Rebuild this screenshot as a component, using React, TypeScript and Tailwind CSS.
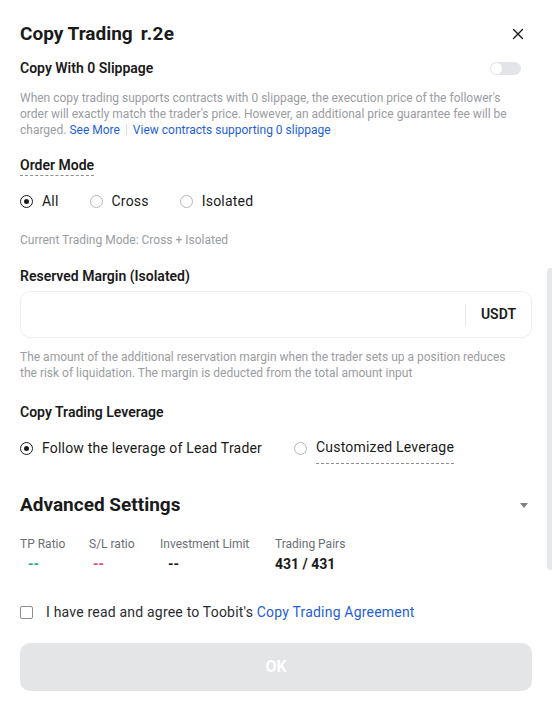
import { X } from "lucide-react";

function Radio({ checked, label, dashed }: { checked?: boolean; label: string; dashed?: boolean }) {
  return (
    <label className="flex items-center gap-[9px]">
      <span
        className={
          checked
            ? "flex size-[13px] items-center justify-center rounded-full border border-[#1a1a1a]"
            : "flex size-[13px] items-center justify-center rounded-full border border-[#b4b6bb]"
        }
      >
        {checked ? <span className="size-[5px] rounded-full bg-[#1a1a1a]" /> : null}
      </span>
      <span
        className={
          dashed
            ? "border-b border-dashed border-[#8a8d93] pb-[5px] pt-[5px] text-[14px] tracking-[0.2px] text-[#1a1a1a]"
            : "text-[14px] tracking-[0.2px] text-[#1a1a1a]"
        }
      >
        {label}
      </span>
    </label>
  );
}

function Stat({ label, value, className }: { label: string; value: string; className: string }) {
  return (
    <div className="flex flex-col gap-[2px]">
      <span className="text-[12px] leading-4 text-[#6b6e75]">{label}</span>
      <span className={className}>{value}</span>
    </div>
  );
}

export default function App() {
  return (
    <div className="relative h-[709px] w-[552px] overflow-hidden bg-white font-['Roboto',sans-serif] text-[#1a1a1a]">
      {/* scrollbar thumb on the right edge */}
      <div className="absolute right-0 top-[268px] h-[302px] w-[5px] rounded-l-sm bg-[#e6e7e9]" />

      <div className="flex flex-col px-5">
        <div className="flex items-center justify-between pt-[22px]">
          <h1 className="text-[19px] font-bold leading-6">
            Copy Trading<span className="ml-[8px] tracking-[0.4px]">r.2e</span>
          </h1>
          <X className="mr-[5px] size-[18px] text-[#1a1a1a]" strokeWidth={1.8} />
        </div>

        <div className="mt-[12px] flex items-center justify-between">
          <span className="text-[14px] font-semibold leading-5">Copy With 0 Slippage</span>
          <span className="mr-[11px] flex h-[13px] w-[31px] items-center rounded-full bg-[#e3e4e7] px-[1px]">
            <span className="size-[11px] rounded-full bg-white" />
          </span>
        </div>

        <p className="mt-[12px] pr-4 text-[12px] leading-4 text-[#9a9ca1]">
          When copy trading supports contracts with 0 slippage, the execution price of the follower's order
          will exactly match the trader's price. However, an additional price guarantee fee will be charged.{" "}
          <span className="text-[#1f5fd6]">See More</span>
          <span className="mx-[6px] inline-block h-[11px] w-px bg-[#dcdde0] align-[-1px]" />
          <span className="text-[#1f5fd6]">View contracts supporting 0 slippage</span>
        </p>

        <div className="mt-[15px]">
          <span className="border-b border-dashed border-[#8a8d93] pb-[2px] text-[14px] font-semibold leading-5">
            Order Mode
          </span>
        </div>

        <div className="mt-[14px] flex items-center gap-[31px]">
          <Radio checked label="All" />
          <Radio label="Cross" />
          <Radio label="Isolated" />
        </div>

        <p className="mt-[20px] text-[12px] leading-4 text-[#9a9ca1]">Current Trading Mode: Cross + Isolated</p>

        <h2 className="mt-[18px] text-[14px] font-semibold leading-5">Reserved Margin (Isolated)</h2>

        <div className="mt-[5px] flex h-[47px] items-center justify-end rounded-[10px] border border-[#eceef0]">
          <span className="h-[22px] w-px bg-[#e8e9eb]" />
          <span className="px-[15px] text-[14px] font-semibold">USDT</span>
        </div>

        <p className="mt-[11px] pr-4 text-[12px] leading-4 text-[#9a9ca1]">
          The amount of the additional reservation margin when the trader sets up a position reduces the risk
          of liquidation. The margin is deducted from the total amount input
        </p>

        <h2 className="mt-[21px] text-[14px] font-semibold leading-5">Copy Trading Leverage</h2>

        <div className="mt-[10px] flex items-center gap-[32px]">
          <Radio checked label="Follow the leverage of Lead Trader" />
          <Radio label="Customized Leverage" dashed />
        </div>

        <div className="mt-[29px] flex items-center justify-between">
          <h2 className="text-[19px] font-bold leading-6">Advanced Settings</h2>
          <svg viewBox="0 0 8 5" className="mr-[4px] h-[5px] w-[8px] text-[#7d8087]">
            <path d="M0 0h8L4 5z" fill="currentColor" />
          </svg>
        </div>

        <div className="mt-[19px] grid grid-cols-[69px_71px_115px_auto] items-start">
          <Stat label="TP Ratio" value="--" className="pl-2 text-[14px] font-bold leading-5 text-[#1bab7c]" />
          <Stat label="S/L ratio" value="--" className="pl-1 text-[14px] font-bold leading-5 text-[#e2476a]" />
          <Stat label="Investment Limit" value="--" className="pl-2 text-[14px] font-bold leading-5" />
          <Stat label="Trading Pairs" value="431 / 431" className="text-[14px] font-bold leading-5" />
        </div>

        <label className="mt-[28px] flex items-center gap-[13px]">
          <span className="size-[13px] rounded-[2px] border border-[#8a8d93]" />
          <span className="text-[14px] leading-5 tracking-[0.2px] text-[#2a2c30]">
            I have read and agree to Toobit's <span className="text-[#1f5fd6]">Copy Trading Agreement</span>
          </span>
        </label>

        <button className="mt-[21px] flex h-[48px] items-center justify-center rounded-[10px] bg-[#e4e5e7] text-[16px] font-bold text-white">
          OK
        </button>
      </div>
    </div>
  );
}
